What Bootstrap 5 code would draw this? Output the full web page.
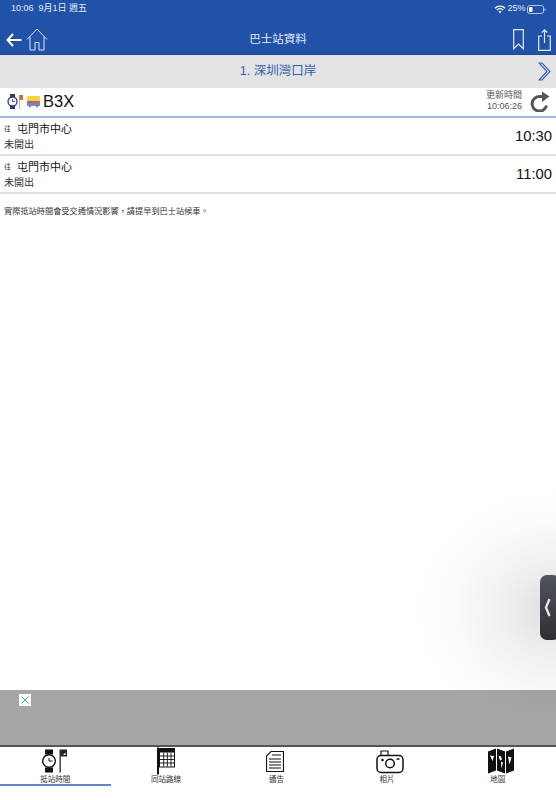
<!DOCTYPE html>
<html lang="zh-Hant">
<head>
    <meta charset="UTF-8">
    <meta name="viewport" content="width=device-width, initial-scale=1.0">
    <link href="https://cdn.jsdelivr.net/npm/bootstrap@5.3.3/dist/css/bootstrap.min.css" rel="stylesheet">
    <script src="https://cdn.jsdelivr.net/npm/bootstrap@5.3.3/dist/js/bootstrap.bundle.min.js"></script>
    <title>巴士站資料</title>
    <style>
        html, body{
            height: 800px;
            overflow: hidden;
        }
        body{
            font-family: "Liberation Sans", "Noto Sans CJK TC", sans-serif;
            color: #111;
            background: #fff;
        }
        .screen{
            height: 800px;
            position: relative;
            overflow: hidden;
        }
        .app-head{
            height: 55px;
            background: #2152aa;
            color: #fff;
            border-bottom: 1px solid #1c4894;
        }
        .status-row{
            height: 16px;
            font-size: 9px;
            padding: 2px 10px 0 11px;
            color: #e4ebf7;
        }
        .status-right{
            gap: 1.5px;
        }
        .title-row{
            height: 38px;
            padding: 9px 5px 0 6px;
            position: relative;
        }
        .head-title{
            position: absolute;
            left: 0;
            right: 0;
            top: 15px;
            text-align: center;
            font-size: 11.5px;
            color: #e4ebf7;
        }
        .head-actions{
            gap: 14px;
        }
        .stop-bar{
            height: 33px;
            background: #e3e3e3;
            color: #2f62b5;
            font-size: 12.5px;
            padding-bottom: 1px;
            position: relative;
        }
        .stop-next{
            position: absolute;
            right: 5px;
            top: 7px;
        }
        .route-row{
            height: 30px;
            border-bottom: 2px solid #a3bbe2;
            padding: 0 6px 2px 7px;
        }
        .route-no{
            font-size: 16.5px;
            margin-left: 3px;
        }
        .update-time{
            font-size: 9px;
            line-height: 11px;
            color: #555;
            text-align: right;
            margin-right: 8px;
        }
        .eta-row{
            height: 38px;
            border-bottom: 2px solid #e2e2e2;
            padding: 4px 4px 0 4px;
        }
        .to-label{
            font-size: 7px;
            line-height: 14px;
            width: 13px;
            color: #333;
            align-self: flex-start;
        }
        .dest-name{
            font-size: 11px;
            line-height: 15px;
        }
        .eta-status{
            font-size: 10px;
            line-height: 15px;
            color: #333;
        }
        .eta-time{
            font-size: 14.8px;
            margin-top: 3px;
        }
        .notice-text{
            font-size: 8.2px;
            padding: 12px 4px 0;
            color: #333;
        }
        .page-fill{
            flex: 1;
        }
        .side-shade{
            position: absolute;
            left: 416px;
            top: 490px;
            width: 280px;
            height: 240px;
            background: radial-gradient(closest-side, rgba(0,0,0,.13), rgba(0,0,0,.06) 40%, rgba(0,0,0,.02) 72%, rgba(0,0,0,0));
            pointer-events: none;
        }
        .side-handle{
            position: absolute;
            left: 540px;
            top: 575px;
            width: 20px;
            height: 65px;
            border-radius: 7px;
            background: linear-gradient(#50545b, #2e2f33);
        }
        .ad-area{
            height: 55px;
            background: #a6a6a6;
            position: relative;
        }
        .ad-close{
            position: absolute;
            left: 19px;
            top: 4px;
            width: 12px;
            height: 12px;
            background: #fff;
        }
        .tab-area{
            height: 55px;
            border-top: 2px solid #555;
            background: #fff;
            padding-right: 3px;
            position: relative;
        }
        .tab-cell{
            width: 20%;
            height: 39px;
            font-size: 7.5px;
            color: #333;
            line-height: 9px;
        }
        .tab-cell.is-active{
            border-bottom: 2px solid #5b86d6;
        }
        .tab-icon{
            height: 28px;
        }
        .icon-right{
            margin-left: 6px;
        }
        .icon-left{
            margin-right: 2px;
        }
    </style>
</head>
<body>
    <div class="screen d-flex flex-column">
        <div class="app-head flex-shrink-0">
            <div class="status-row d-flex justify-content-between align-items-center">
                <span>10:06&nbsp; 9月1日 週五</span>
                <span class="status-right d-flex align-items-center">
                    <svg width="12" height="9" viewBox="0 0 12 9"><path d="M1 3.2a7 7 0 0 1 10 0M2.8 5a4.5 4.5 0 0 1 6.4 0" fill="none" stroke="#fff" stroke-width="1.3"/><path d="M4.4 6.4a2.3 2.3 0 0 1 3.2 0L6 8.2z" fill="#fff"/></svg>
                    <span>25%</span>
                    <svg width="19" height="9" viewBox="0 0 19 9"><rect x=".5" y=".5" width="16" height="8" rx="2.2" fill="none" stroke="#b9c9e6"/><rect x="2" y="2" width="3.5" height="5" rx=".8" fill="#fff"/><path d="M17.6 3v3a1.6 1.6 0 0 0 0-3z" fill="#b9c9e6"/></svg>
                </span>
            </div>
            <div class="title-row d-flex align-items-center justify-content-between">
                <div class="d-flex align-items-center gap-1">
                    <svg width="16" height="14" viewBox="0 0 16 14"><path d="M7 1 1.500 7 7 13M1.500 7H15.500" fill="none" stroke="#fff" stroke-width="2"/></svg>
                    <svg width="22" height="23" viewBox="0 0 22 23"><path d="M1 11.500 11 1l10 10.500M4 9v13h5v-7.500h4V22h5V9" fill="none" stroke="#dbe5f5" stroke-width="1"/></svg>
                </div>
                <div class="head-title">巴士站資料</div>
                <div class="head-actions d-flex align-items-center">
                    <svg width="11" height="21" viewBox="0 0 11 21"><path d="M.7.7h9.600v19L5.500 15 .7 19.700z" fill="none" stroke="#e4ebf7" stroke-width="1.200"/></svg>
                    <svg width="13" height="22" viewBox="0 0 13 22"><path d="M4 7H.7v14.300h11.600V7H9M6.500 14V1M3.800 3.500 6.500 .8l2.700 2.700" fill="none" stroke="#e4ebf7" stroke-width="1.200"/></svg>
                </div>
            </div>
        </div>

        <div class="stop-bar d-flex align-items-center justify-content-center flex-shrink-0">
            <span>1. 深圳灣口岸</span>
            <svg class="stop-next" width="13" height="19" viewBox="0 0 13 19"><path d="M1 1h3l8 8.500L4 18H1l8-8.500z" fill="none" stroke="#2f62b5" stroke-width="1.100"/></svg>
        </div>

        <div class="route-row d-flex align-items-center flex-shrink-0">
            <svg width="16" height="15" viewBox="0 0 16 15">
                <rect x="3" y="0" width="5" height="3" fill="#2f3a80"/>
                <rect x="3" y="12" width="5" height="3" fill="#2f3a80"/>
                <circle cx="5.500" cy="7.500" r="4.500" fill="#fff" stroke="#2f3a80" stroke-width="1.300"/>
                <path d="M5.500 5v2.500H8" fill="none" stroke="#2f3a80" stroke-width=".8"/>
                <rect x="12" y="1" width="1" height="14" fill="#bbb"/>
                <rect x="12.500" y="1" width="3.500" height="5" fill="#d9662c"/>
            </svg>
            <svg class="ms-1" width="13" height="13" viewBox="0 0 13 13">
                <rect x="0" y="1" width="13" height="5" rx="1" fill="#f5d63d"/>
                <rect x="0" y="6" width="13" height="2" fill="#e9534a"/>
                <rect x="0" y="8" width="13" height="3" fill="#5a93dd"/>
                <circle cx="3" cy="11.500" r="1" fill="#777"/>
                <circle cx="10" cy="11.500" r="1" fill="#777"/>
            </svg>
            <span class="route-no">B3X</span>
            <div class="update-time ms-auto">更新時間<br>10:06:26</div>
            <svg width="20" height="21" viewBox="0 0 20 21"><path d="M16.500 14.500A7.300 7.300 0 1 1 10 5.500h4" fill="none" stroke="#555" stroke-width="3"/><path d="M12 .5 19.500 5.500 12 11z" fill="#555"/></svg>
        </div>

        <div class="eta-row d-flex justify-content-between flex-shrink-0">
            <div>
                <div class="d-flex">
                    <div class="to-label">往</div>
                    <div class="dest-name">屯門市中心</div>
                </div>
                <div class="eta-status">未開出</div>
            </div>
            <div class="eta-time">10:30</div>
        </div>
        <div class="eta-row d-flex justify-content-between flex-shrink-0">
            <div>
                <div class="d-flex">
                    <div class="to-label">往</div>
                    <div class="dest-name">屯門市中心</div>
                </div>
                <div class="eta-status">未開出</div>
            </div>
            <div class="eta-time">11:00</div>
        </div>
        <div class="notice-text">實際抵站時間會受交通情況影響，請提早到巴士站候車。</div>
        <div class="page-fill"></div>

        <div class="ad-area flex-shrink-0">
            <div class="ad-close d-flex align-items-center justify-content-center">
                <svg width="8" height="8" viewBox="0 0 8 8"><path d="M.5.5l7 7M7.500.5l-7 7" stroke="#3fa9d8" stroke-width="1"/></svg>
            </div>
        </div>
        <div class="tab-area d-flex flex-shrink-0">
            <div class="tab-cell is-active d-flex flex-column align-items-center">
                <svg class="tab-icon" width="26" height="25" viewBox="0 0 26 25">
                    <rect x="3" y="1" width="8" height="5" fill="#111"/>
                    <rect x="3" y="19" width="8" height="5" fill="#111"/>
                    <circle cx="7" cy="12.500" r="6.300" fill="#fff" stroke="#111" stroke-width="1.400"/>
                    <path d="M7 9.500v3h3.500" fill="none" stroke="#111" stroke-width="1"/>
                    <rect x="17.500" y="1" width="1.300" height="23" fill="#222"/>
                    <path d="M18.500 1H25v7h-6.500z" fill="#222"/>
                    <path d="M21 6.500 23.500 4v2.500z" fill="#fff"/>
                </svg>
                <span>抵站時間</span>
            </div>
            <div class="tab-cell d-flex flex-column align-items-center">
                <svg class="tab-icon" width="18" height="27" viewBox="0 0 18 27">
                    <rect x="0" y="0" width="2" height="27" fill="#111"/>
                    <rect x="2.500" y="1" width="15" height="18.500" fill="#fff" stroke="#111"/>
                    <rect x="2" y="1" width="16" height="4" fill="#111"/>
                    <path d="M3 8.500h14M3 12h14M3 15.500h14M6.700 5v14M10.400 5v14M14 5v14" stroke="#111" stroke-width=".9"/>
                </svg>
                <span>同站路線</span>
            </div>
            <div class="tab-cell d-flex flex-column align-items-center">
                <svg class="tab-icon icon-left" width="18" height="24" viewBox="0 0 18 24">
                    <path d="M5 2.500h12.500v20H.5V7z" fill="#fff" stroke="#111" stroke-width="1.200"/>
                    <path d="M3 10h12M3 13h12M3 16h12M3 19h12M6 6h9" stroke="#111" stroke-width="1.100"/>
                </svg>
                <span>通告</span>
            </div>
            <div class="tab-cell d-flex flex-column align-items-center">
                <svg class="tab-icon icon-right" width="28" height="25" viewBox="0 0 28 25">
                    <path d="M5 7V2.500h7V7" fill="none" stroke="#111" stroke-width="1.200"/>
                    <rect x="1" y="7" width="26" height="17" rx="4" fill="#fff" stroke="#111" stroke-width="1.500"/>
                    <circle cx="14" cy="15" r="4.300" fill="none" stroke="#111" stroke-width="1.500"/>
                    <circle cx="6.500" cy="11.500" r="1.300" fill="#111"/>
                    <path d="M20.500 10.500h3" stroke="#111" stroke-width="1.500"/>
                </svg>
                <span>相片</span>
            </div>
            <div class="tab-cell d-flex flex-column align-items-center">
                <svg class="tab-icon icon-right" width="26" height="27" viewBox="0 0 26 27">
                    <path d="M0 4 8 1v22l-8 3zM9 1l8 3v22l-8-3zM18 4l8-3v22l-8 3z" fill="#111"/>
                    <path d="M2 8l4 .5-1.500 5zM10.500 8l2.500 1 1 3-2 1zM13 14l2 1-1.500 6zM20 9l3.500 1-2 7z" fill="#fff"/>
                </svg>
                <span>地圖</span>
            </div>
        </div>

        <div class="side-shade"></div>
        <div class="side-handle d-flex align-items-center ps-1">
            <svg width="7" height="19" viewBox="0 0 7 19"><path d="M5.500 1 2 9.500 5.500 18" fill="none" stroke="#e6e8ee" stroke-width="2.300"/></svg>
        </div>
    </div>
</body>
</html>
